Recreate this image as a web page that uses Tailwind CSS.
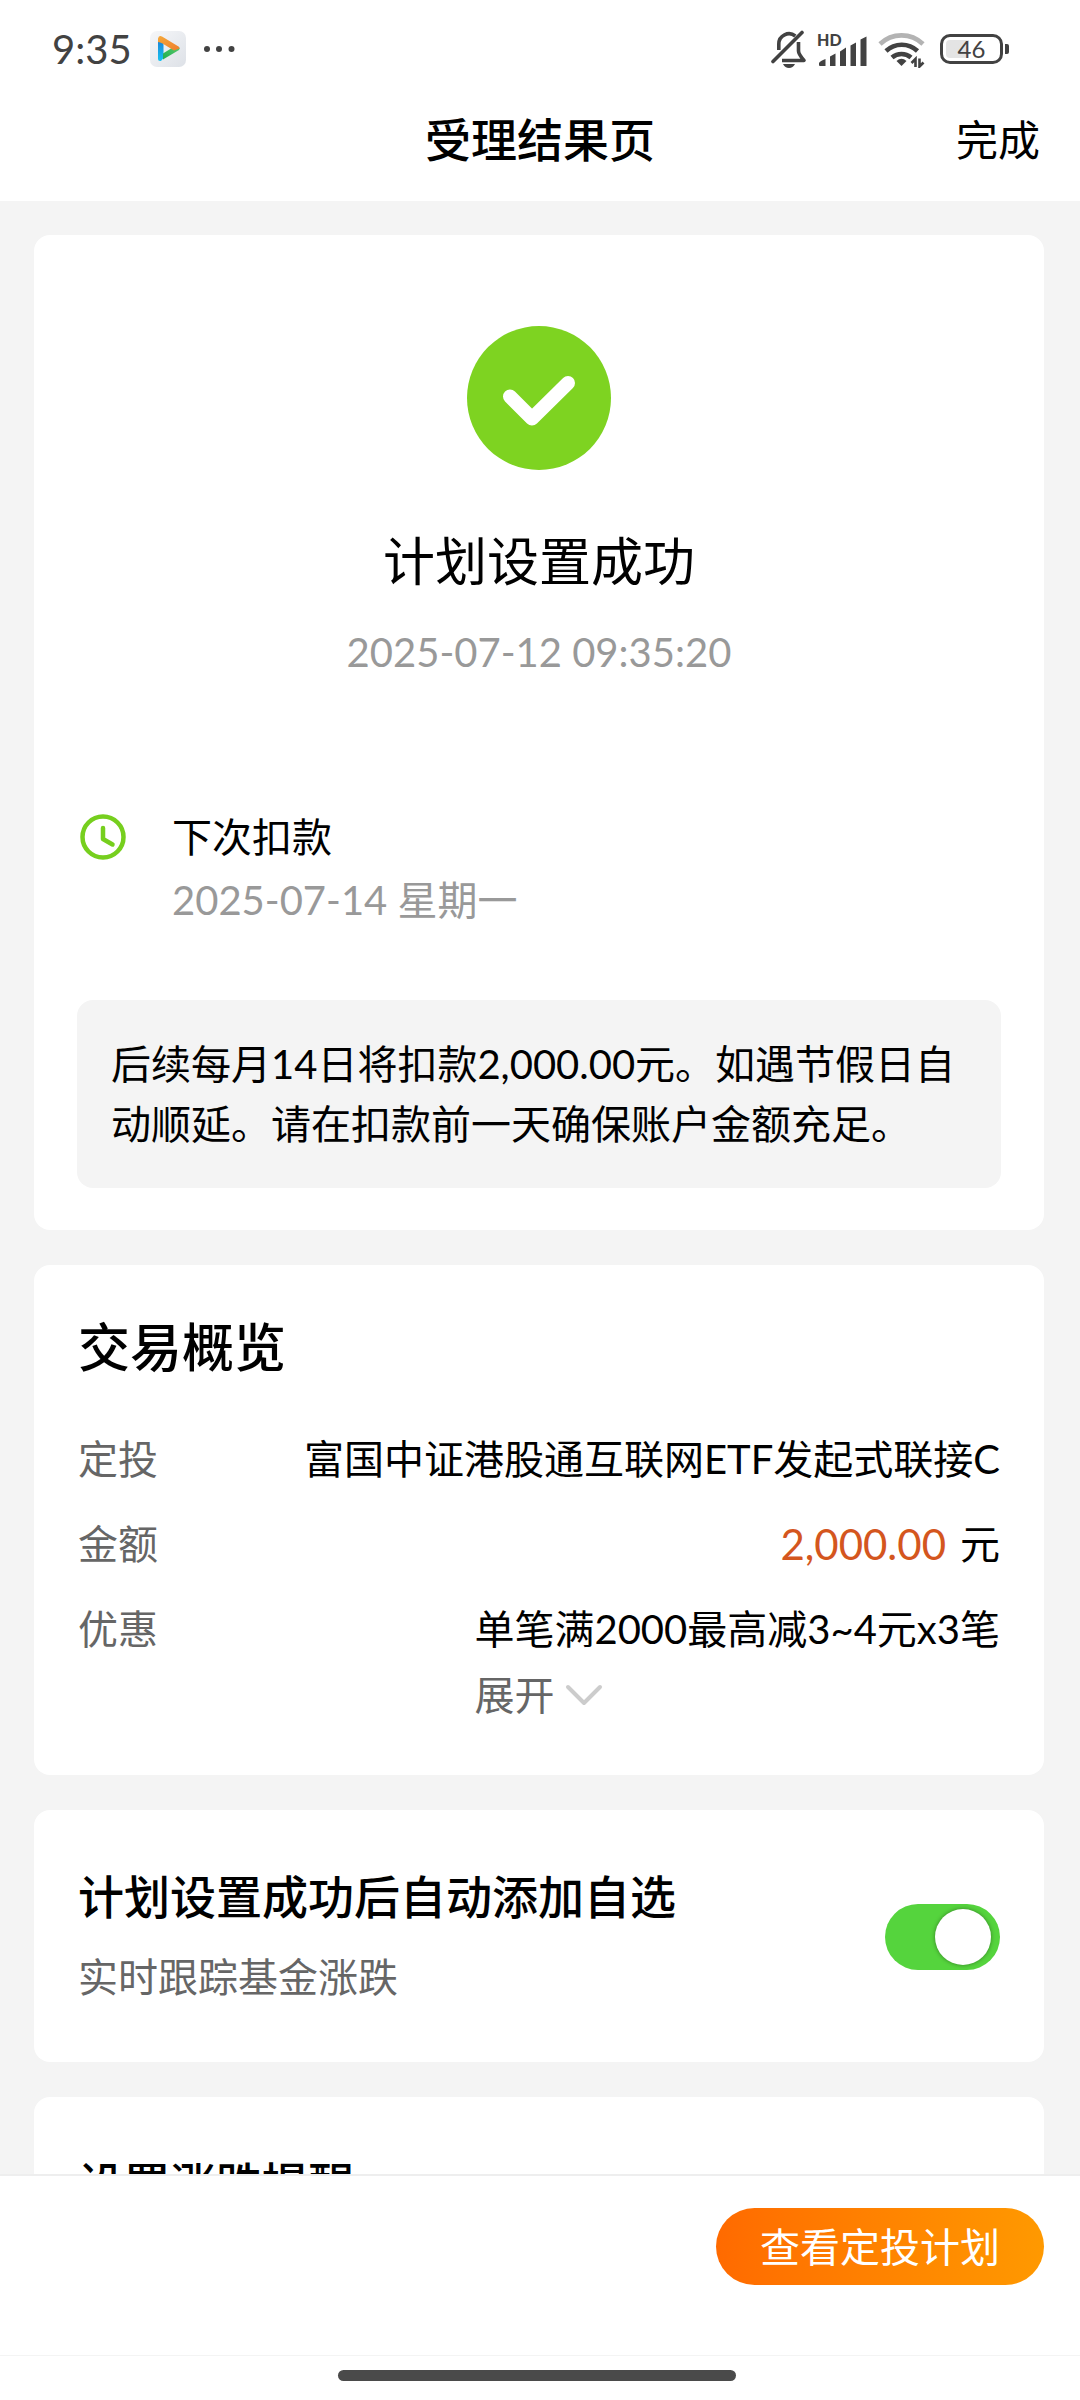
<!DOCTYPE html>
<html lang="zh-CN">
<head>
<meta charset="utf-8">
<meta name="viewport" content="width=device-width, initial-scale=1">
<title>受理结果页</title>
<script src="https://cdn.jsdelivr.net/npm/@tailwindcss/browser@4"></script>
</head>
<body class="flex h-screen flex-col bg-[#f4f4f4] font-[Lato,'Noto_Sans_CJK_SC',sans-serif] text-[40px] leading-[60px] text-black">

<header class="shrink-0 bg-white pb-[19px]">
  <!-- System status bar -->
  <div class="flex h-[98px] items-center justify-between pr-[71px] pl-[52px] text-[#424242]">
    <div class="flex items-center">
      <time class="text-[40px]">9:35</time>
      <svg class="ml-[18px] size-9" viewBox="0 0 36 36" aria-hidden="true">
        <defs>
          <linearGradient id="tile" x1="0" y1="0" x2="1" y2="1"><stop offset="0" stop-color="#f6f7f9"/><stop offset="1" stop-color="#dde1e7"/></linearGradient>
          <linearGradient id="blue" x1="0" y1="0" x2="0" y2="1"><stop offset="0" stop-color="#1b7fd6"/><stop offset="1" stop-color="#17c3f0"/></linearGradient>
          <linearGradient id="orange" x1="0" y1="0" x2="1" y2="1"><stop offset="0" stop-color="#f5a93a"/><stop offset="1" stop-color="#ee7d2c"/></linearGradient>
          <linearGradient id="green" x1="0" y1="1" x2="1" y2="0"><stop offset="0" stop-color="#1fae50"/><stop offset="1" stop-color="#5acb6c"/></linearGradient>
        </defs>
        <rect width="36" height="36" rx="7" fill="url(#tile)"/>
        <path d="M8 8v20q0 2 2 2h1l2.500-3V12z" fill="url(#blue)"/>
        <path d="M13 28.500v-6l12-7.500 4 1q1.500 1.500 0 3z" fill="url(#green)"/>
        <path d="M8 11V7.500Q9 4 12 5.500L28.500 15.500q1 .800 1 2L24 19.500 12.500 12.500Q10 11 8 11z" fill="url(#orange)"/>
      </svg>
      <svg class="ml-[17px] h-2 w-8" viewBox="0 0 32 8" fill="currentColor" aria-hidden="true"><circle cx="4" cy="4" r="3"/><circle cx="16" cy="4" r="3"/><circle cx="28.500" cy="4" r="3"/></svg>
    </div>
    <div class="flex items-center">
      <svg class="h-[38px] w-9" viewBox="0 0 36 38" fill="none" stroke="currentColor" stroke-width="3.600" aria-hidden="true">
        <path d="M7.800 20V14a10.200 10.200 0 0 1 16.500-8"/>
        <path d="M2 31.500 31 2.500" stroke-linecap="round"/>
        <path d="M27.500 12v9q0 3 5.500 9.500H11" stroke-linejoin="round"/>
        <path d="M12 34h12q-2 4-6 4t-6-4z" fill="currentColor" stroke="none"/>
      </svg>
      <svg class="ml-2.5 h-9 w-[50px]" viewBox="-2 -4 50 36" fill="currentColor" aria-hidden="true">
        <text x="-2" y="11" font-size="16" font-weight="900" font-family="Lato">HD</text>
        <path d="M0 30.500v-2.500Q1 26 6.500 24V31H1zM11 31v-9.500l5.500-3V31zM21 31V16.500l6-4V31zM31.500 31V10.500l5.500-3V31zM41.500 31V4.500l6-3V31z"/>
      </svg>
      <svg class="ml-[11px] h-[37px] w-12" viewBox="0 0 48 37" fill="none" stroke="currentColor" stroke-width="4.600" aria-hidden="true">
        <path d="M2 13a31 31 0 0 1 43 0" stroke="#b3b3b3"/>
        <path d="M8 20a23 23 0 0 1 31.500 0"/>
        <path d="M14 26.500a14.500 14.500 0 0 1 19 0"/>
        <path d="M18.500 30q5-4.500 10 0l-5 5z" fill="currentColor" stroke="none"/>
        <path d="M37.500 36V28l-4 4M41.500 27.500v8l4-4" stroke-width="2.600"/>
      </svg>
      <div class="ml-3.5 flex items-center gap-0.5">
        <div class="flex h-[30px] w-[63px] items-center justify-center rounded-[10px] border-3 border-current bg-linear-to-r from-[#e4e4e4] from-45% to-white to-45% bg-clip-content p-[3px] text-[24px] leading-[22px]">46</div>
        <div class="h-2.5 w-1 rounded-r-xs bg-current"></div>
      </div>
    </div>
  </div>
  <nav class="grid h-[84px] grid-cols-[1fr_auto_1fr] items-center px-10">
    <h1 class="col-start-2 text-[46px] font-medium">受理结果页</h1>
    <button type="button" class="justify-self-end text-[42px]">完成</button>
  </nav>
</header>

<main class="flex min-h-0 flex-1 flex-col gap-[35px] overflow-y-auto pt-[34px] pr-9 pl-[34px] [scrollbar-width:none]">

  <section class="shrink-0 rounded-2xl bg-white px-[43px] pt-[91px] pb-[42px]">
    <div class="flex flex-col items-center">
      <svg class="size-36" viewBox="0 0 144 144" aria-hidden="true">
        <circle cx="72" cy="72" r="72" fill="#7ed321"/>
        <path d="M43 70.500 65 92.500 101 57" fill="none" stroke="#fff" stroke-width="14" stroke-linecap="round" stroke-linejoin="round"/>
      </svg>
      <h2 class="mt-[61px] text-[52px]">计划设置成功</h2>
      <time class="mt-[31px] text-[40px] text-[#999]">2025-07-12 09:35:20</time>
    </div>
    <div class="mt-[125px] flex">
      <svg class="mt-[7px] ml-[3px] size-[46px]" viewBox="0 0 46 46" fill="none" stroke="#76cf1e" stroke-width="4.500" stroke-linecap="round" stroke-linejoin="round" aria-hidden="true">
        <circle cx="23" cy="23" r="20.500"/><path d="M23 14v11l9.500 5.500"/>
      </svg>
      <div class="ml-[46px]">
        <h3>下次扣款</h3>
        <p class="mt-[3px] text-[#999]">2025-07-14 星期一</p>
      </div>
    </div>
    <p class="mt-[70px] rounded-2xl bg-[#f4f4f4] p-[34px]">后续每月14日将扣款2,000.00元。如遇节假日自动顺延。请在扣款前一天确保账户金额充足。</p>
  </section>

  <section class="shrink-0 rounded-2xl bg-white px-11 pt-[52px] pb-[50px]">
    <h2 class="text-[52px] font-medium">交易概览</h2>
    <dl class="mt-[52px] flex flex-col gap-[25px]">
      <div class="flex justify-between">
        <dt class="text-[#666]">定投</dt>
        <dd>富国中证港股通互联网ETF发起式联接C</dd>
      </div>
      <div class="flex justify-between">
        <dt class="text-[#666]">金额</dt>
        <dd class="flex gap-3.5"><span class="text-[42px] text-[#d4561e]">2,000.00</span>元</dd>
      </div>
      <div class="flex justify-between">
        <dt class="text-[#666]">优惠</dt>
        <dd>
          <p>单笔满2000最高减3~4元x3笔</p>
          <button type="button" class="mt-1.5 flex items-center gap-2.5 text-[#666]">展开
            <svg class="h-6 w-10" viewBox="0 0 40 24" fill="none" stroke="#ccc" stroke-width="4" stroke-linecap="round" stroke-linejoin="round" aria-hidden="true"><path d="M4 4 20 20 36 4"/></svg>
          </button>
        </dd>
      </div>
    </dl>
  </section>

  <section class="flex shrink-0 items-center justify-between rounded-2xl bg-white px-11 pt-[57px] pb-[55px]">
    <label for="watch">
      <span class="block text-[46px] font-medium">计划设置成功后自动添加自选</span>
      <span class="mt-5 block text-[#666]">实时跟踪基金涨跌</span>
    </label>
    <input id="watch" type="checkbox" checked class="flex h-[66px] w-[115px] appearance-none items-center rounded-full bg-[#ddd] px-[9px] before:size-14 before:rounded-full before:bg-white before:shadow-[0_0_4px_#0006] checked:bg-[#55d43d] checked:before:ml-auto">
  </section>

  <section class="shrink-0 rounded-2xl bg-white px-11 pt-[57px] pb-[55px]">
    <h3 class="text-[46px] font-medium">设置涨跌提醒</h3>
  </section>
</main>

<footer class="shrink-0 border-t-2 border-[#eee] bg-white">
  <div class="flex justify-end border-b border-[#f4f4f4] pt-8 pr-9 pb-[70px]">
    <button type="button" class="h-[77px] rounded-full bg-linear-to-r from-[#ff6a00] to-[#ff9900] px-11 text-white">查看定投计划</button>
  </div>
  <div class="flex h-11 justify-center pt-3.5 pr-1.5">
    <div class="h-[11px] w-[37%] rounded-full bg-[#4a4a4a]"></div>
  </div>
</footer>
</body>
</html>
